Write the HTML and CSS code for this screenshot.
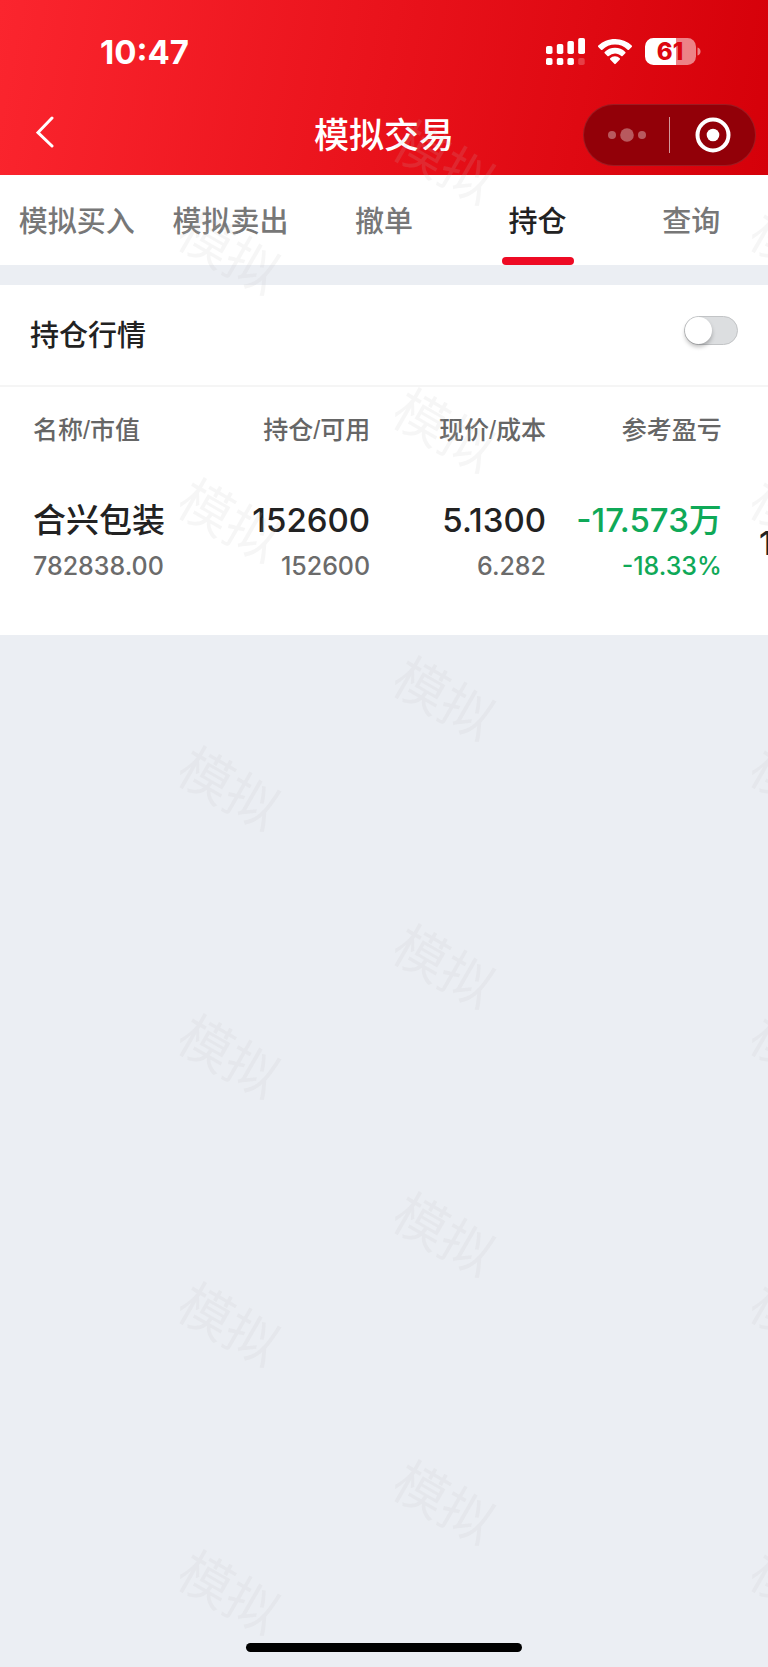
FILE: index.html
```html
<!DOCTYPE html>
<html lang="zh-CN">
<head>
    <meta charset="UTF-8">
    <meta name="viewport" content="width=device-width, initial-scale=1.0">
    <title>模拟交易</title>
    <link rel="stylesheet" href="styles.css">
</head>
<body>
    <header class="header">
        <div class="status-bar">
            <span class="time">10:47</span>
            <div class="status-icons">
                <svg width="39" height="28" viewBox="0 0 39 28" fill="#fff" aria-hidden="true">
                    <rect x="0" y="8" width="6.5" height="8" rx="1.8"/>
                    <rect x="10.8" y="6" width="6.5" height="10" rx="1.8"/>
                    <rect x="21.4" y="3" width="6.5" height="13" rx="1.8"/>
                    <rect x="32.2" y="0" width="6.8" height="16" rx="1.8"/>
                    <rect x="0" y="20" width="6.5" height="7" rx="1.8"/>
                    <rect x="10.8" y="20" width="6.5" height="7" rx="1.8"/>
                    <rect x="21.4" y="20" width="6.5" height="7" rx="1.8"/>
                    <rect x="32.2" y="20" width="6.5" height="7" rx="1.8" opacity="0.22"/>
                </svg>
                <svg width="34" height="28" viewBox="0 0 34 28" fill="#fff" aria-hidden="true">
                    <path d="M17 1C10.500 1 4.600 3.500.3 7.600a1 1 0 0 0 0 1.400l2.700 2.700a1 1 0 0 0 1.400 0A18.200 18.200 0 0 1 17 6.600c4.900 0 9.300 1.900 12.600 5.100a1 1 0 0 0 1.400 0L33.700 9a1 1 0 0 0 0-1.400A24 24 0 0 0 17 1z"/>
                    <path d="M17 9.800c-4 0-7.600 1.600-10.300 4.100a1 1 0 0 0 0 1.400l2.700 2.700a1 1 0 0 0 1.400 0A9 9 0 0 1 17 15.400c2.400 0 4.600 1 6.200 2.600a1 1 0 0 0 1.400 0l2.700-2.700a1 1 0 0 0 0-1.400A15 15 0 0 0 17 9.800z"/>
                    <path d="M17 18.300c-1.900 0-3.600.8-4.800 2a.9.900 0 0 0 0 1.300l4.100 4.200a1 1 0 0 0 1.400 0l4.100-4.200a.9.900 0 0 0 0-1.300 6.800 6.800 0 0 0-4.800-2z"/>
                </svg>
                <svg width="56" height="28" viewBox="0 0 56 28" aria-hidden="true">
                    <path d="M8.500 0H31v27H8.500A8.500 8.500 0 0 1 0 18.500v-10A8.500 8.500 0 0 1 8.500 0z" fill="#fff"/>
                    <path d="M31 0h11.500A8.500 8.500 0 0 1 51 8.500v10a8.500 8.500 0 0 1-8.500 8.500H31z" fill="#fff" opacity="0.5"/>
                    <path d="M52.500 9.500c2 .6 3 2 3 4s-1 3.400-3 4z" fill="#fff" opacity="0.5"/>
                    <text class="battery-level" x="25" y="22" text-anchor="middle">61</text>
                </svg>
            </div>
        </div>
        <nav class="nav-bar">
            <a class="back" href="#" aria-label="返回">
                <svg width="18" height="32" viewBox="0 0 18 32" fill="none" stroke="#fff" stroke-width="3" stroke-linecap="round" aria-hidden="true">
                    <path d="M16 2L2 16.500 16 30"/>
                </svg>
            </a>
            <h1 class="title">模拟交易</h1>
            <div class="capsule">
                <button class="capsule-btn" type="button" aria-label="更多">
                    <svg width="38" height="14" viewBox="0 0 38 14" fill="#fff" opacity="0.35" aria-hidden="true">
                        <circle cx="4" cy="7" r="4"/>
                        <circle cx="19" cy="7" r="6.800"/>
                        <circle cx="34" cy="7" r="4"/>
                    </svg>
                </button>
                <span class="capsule-line"></span>
                <button class="capsule-btn" type="button" aria-label="关闭">
                    <svg width="36" height="36" viewBox="0 0 36 36" aria-hidden="true">
                        <circle cx="18" cy="18" r="15.500" fill="none" stroke="#fff" stroke-width="4"/>
                        <circle cx="18" cy="18" r="6.300" fill="#fff"/>
                    </svg>
                </button>
            </div>
        </nav>
    </header>

    <nav class="tabs">
        <a class="tab" href="#">模拟买入</a>
        <a class="tab" href="#">模拟卖出</a>
        <a class="tab" href="#">撤单</a>
        <a class="tab active" href="#" aria-current="page">持仓</a>
        <a class="tab" href="#">查询</a>
    </nav>

    <main class="content">
        <div class="quote-row">
            <label class="quote-label" for="quote-switch">持仓行情</label>
            <input class="switch" type="checkbox" role="switch" id="quote-switch">
        </div>

        <div class="holdings-wrap">
            <table class="holdings">
                <thead>
                    <tr>
                        <th class="col-name">名称/市值</th>
                        <th class="col-amount">持仓/可用</th>
                        <th class="col-price">现价/成本</th>
                        <th class="col-profit">参考盈亏</th>
                        <th class="col-more"></th>
                    </tr>
                </thead>
                <tbody>
                    <tr>
                        <td class="col-name"><div class="main">合兴包装</div><div class="sub">782838.00</div></td>
                        <td><div class="main">152600</div><div class="sub">152600</div></td>
                        <td><div class="main">5.1300</div><div class="sub">6.282</div></td>
                        <td class="down"><div class="main">-17.573万</div><div class="sub">-18.33%</div></td>
                        <td class="col-more"><div class="main">1</div></td>
                    </tr>
                </tbody>
            </table>
        </div>
    </main>

    <footer class="footer">
        <div class="home-indicator"></div>
    </footer>

    <svg class="watermark" aria-hidden="true">
        <defs>
            <pattern id="mark" x="172" y="0" width="572" height="268" patternUnits="userSpaceOnUse">
                <text class="mark-text" transform="translate(272 49) rotate(30)" y="19" text-anchor="middle">模拟</text>
                <text class="mark-text" transform="translate(57 139) rotate(30)" y="19" text-anchor="middle">模拟</text>
            </pattern>
        </defs>
        <rect width="100%" height="100%" fill="url(#mark)"/>
    </svg>
</body>
</html>
```

FILE: styles.css
```css
* {
    box-sizing: border-box;
}

body {
    position: relative;
    display: flex;
    flex-direction: column;
    min-height: 100vh;
    margin: 0;
    background-color: #ebeef3;
    color: #222;
    font-family: Inter, "Noto Sans CJK SC", sans-serif;
    font-weight: 500;
}

a {
    color: inherit;
    text-decoration: none;
}

/* header */
.header {
    padding-bottom: 9px;
    background: linear-gradient(100deg, #fb252e 0%, #e9121b 50%, #d50009 100%);
    color: #fff;
}

.status-bar {
    display: flex;
    align-items: center;
    justify-content: space-between;
    height: 104px;
    padding: 0 67px 0 100px;
}

.time {
    font-size: 33px;
    font-weight: 700;
}

.status-icons {
    display: flex;
    align-items: center;
    gap: 13px;
}

.battery-level {
    fill: #dc0710;
    font-size: 24px;
    font-weight: 800;
}

.nav-bar {
    display: grid;
    grid-template-columns: 1fr auto 1fr;
    align-items: center;
    height: 62px;
    padding: 0 12px;
}

.back {
    display: flex;
    align-items: center;
    align-self: start;
    height: 56px;
    padding-left: 24px;
}

.title {
    margin: 0;
    font-size: 35px;
    font-weight: 500;
    line-height: 62px;
}

.capsule {
    position: relative;
    z-index: 2;
    display: flex;
    align-items: center;
    justify-self: end;
    width: 173px;
    height: 62px;
    border: 1px solid rgba(255, 255, 255, 0.1);
    border-radius: 31px;
    background-color: #920008;
}

.capsule-btn {
    display: flex;
    flex: 1;
    align-items: center;
    justify-content: center;
    padding: 0;
    border: none;
    background: none;
    cursor: pointer;
}

.capsule-line {
    width: 1px;
    height: 36px;
    background-color: rgba(255, 255, 255, 0.6);
}

/* tabs */
.tabs {
    display: flex;
    height: 90px;
    background-color: #fff;
}

.tab {
    position: relative;
    flex: 1;
    color: #777;
    font-size: 29px;
    line-height: 94px;
    text-align: center;
}

.tab.active {
    color: #222;
}

.tab.active::after {
    content: "";
    position: absolute;
    bottom: 0;
    left: 50%;
    width: 72px;
    height: 8px;
    margin-left: -36px;
    border-radius: 4px;
    background-color: #ee0a24;
}

/* holdings */
.content {
    margin-top: 20px;
    background-color: #fff;
}

.quote-row {
    display: flex;
    align-items: flex-start;
    justify-content: space-between;
    padding: 31px 30px 29px;
    border-bottom: 2px solid #f5f5f5;
}

.quote-label {
    font-size: 29px;
    line-height: 40px;
}

.switch {
    appearance: none;
    width: 54px;
    height: 29px;
    margin: 0;
    border: 1px solid #c2c4c6;
    border-radius: 15px;
    background-color: #dcdee0;
    cursor: pointer;
}

.switch::before {
    content: "";
    display: block;
    width: 27px;
    height: 27px;
    border-radius: 50%;
    background-color: #fff;
    box-shadow: 0 3px 4px rgba(0, 0, 0, 0.25);
}

.switch:checked {
    background-color: #ee0a24;
}

.switch:checked::before {
    margin-left: auto;
}

.holdings-wrap {
    overflow: hidden;
}

.holdings {
    width: 100%;
    table-layout: fixed;
    border-collapse: collapse;
    text-align: right;
    white-space: nowrap;
}

.holdings th {
    width: 22.9%;
    padding: 24px 0 28px;
    color: #666;
    font-family: "Liberation Sans", "Noto Sans CJK SC", sans-serif;
    font-size: 25px;
    font-weight: 500;
    line-height: 38px;
}

.holdings td {
    padding: 20px 0 46px;
}

.holdings .col-name {
    width: 26%;
    padding-left: 33px;
    text-align: left;
}

.holdings .col-amount {
    width: 22.2%;
}

.holdings .col-more {
    width: 6%;
    padding-left: 37px;
    text-align: left;
}

.main {
    font-size: 33px;
    line-height: 46px;
}

.sub {
    color: #6b6b6b;
    font-size: 25px;
    line-height: 46px;
}

.down,
.down .sub {
    color: #0fa958;
}

/* bottom */
.footer {
    display: flex;
    justify-content: center;
    margin-top: auto;
    padding-bottom: 15px;
}

.home-indicator {
    width: 36%;
    height: 9px;
    border-radius: 5px;
    background-color: #000;
}

.watermark {
    position: absolute;
    top: 114px;
    left: 0;
    width: 100%;
    height: calc(100% - 114px);
    pointer-events: none;
}

.mark-text {
    fill: rgba(190, 190, 190, 0.14);
    font-size: 53px;
    font-weight: 400;
}
```
